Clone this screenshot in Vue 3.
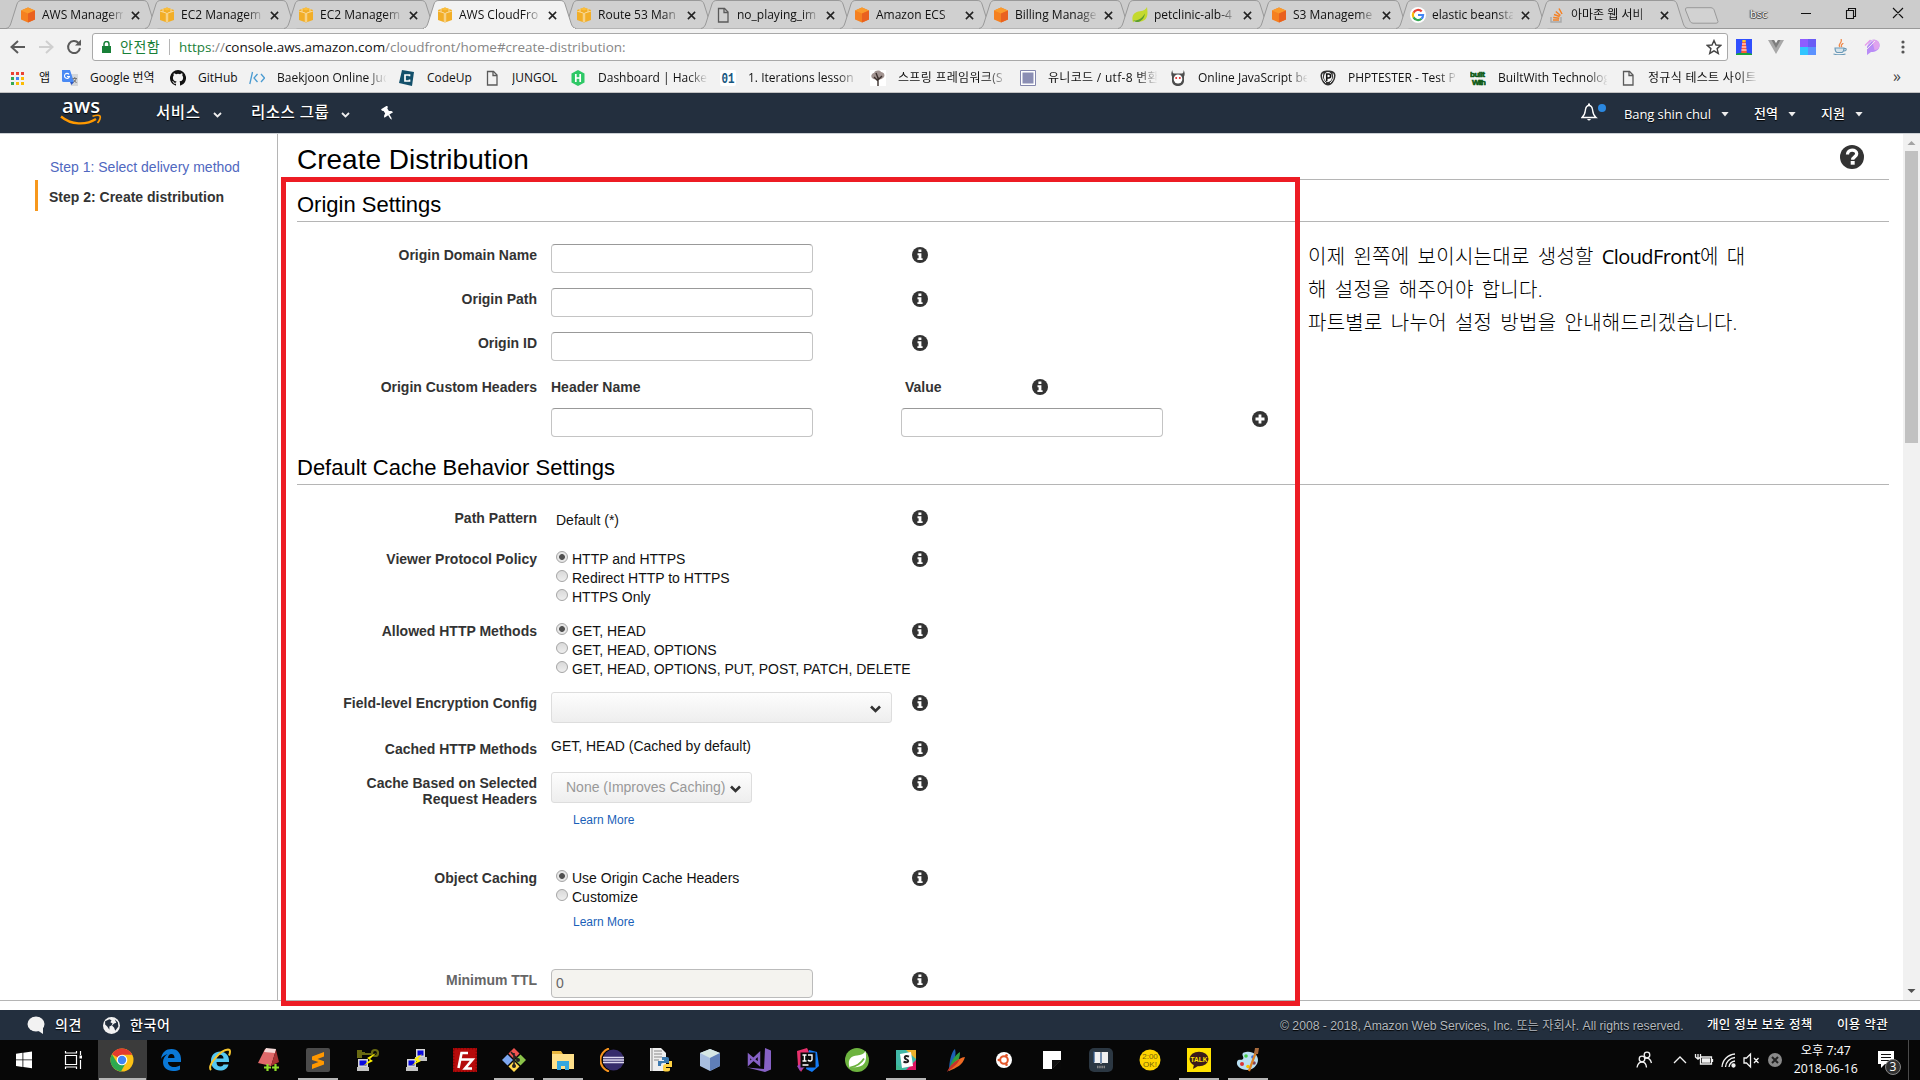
<script setup>
const icons = {
  cubeOrange: '<path d="M8 .5 15 3.5v9L8 15.5l-7-3v-9z" fill="#f58020"/><path d="M8 .5 15 3.5 8 6.5 1 3.5z" fill="#fa9a2c"/><path d="M15 3.5v9L8 15.5v-9z" fill="#e9611f"/>',
  cubeYellow: '<path d="M8 .5 15 3v10l-7 2.5L1 13V3z" fill="#f2ae27"/><path d="M8 .5 12 2 8 3.6 4 2z" fill="#fbbf3c"/><path d="M1.2 4.2 7.3 6v9M14.8 4.2 8.7 6v9M4 2v3M12 2v3" stroke="#f8dfa8" stroke-width=".9" fill="none"/>',
  file: '<path d="M3.5 1.5h6l3.500 3.500v10h-9.500z" fill="none" stroke="#5a5a5a" stroke-width="1.300"/><path d="M9 1.500v4h4" fill="none" stroke="#5a5a5a" stroke-width="1.300"/>',
  leaf: '<path d="M15 0c1 7 1 13-6 14.500-3 .5-5 0-6-1L1 15.500C-1 9 2 5 8 4.300 12 4 14 2 15 0z" fill="#c4d92e"/><path d="M1 13.500c5 .5 9-2 12-7-1 6-5 9-9 8.500z" fill="#5d9e2f"/>',
  google: '<circle cx="8" cy="8" r="8" fill="#fff"/><path d="M11.700 4.400A5.200 5.200 0 0 0 3.500 5.700" stroke="#ea4335" stroke-width="2.200" fill="none"/><path d="M3.500 5.500a5.200 5.200 0 0 0 0 5" stroke="#fbbc05" stroke-width="2.200" fill="none"/><path d="M3.500 10.400a5.200 5.200 0 0 0 8 1.300" stroke="#34a853" stroke-width="2.200" fill="none"/><path d="M8 8h5.100a5.200 5.200 0 0 1-1.700 3.800" stroke="#4285f4" stroke-width="2.200" fill="none"/>',
  stack: '<path d="M2 10v5h10v-5" stroke="#a8a8a8" stroke-width="1.400" fill="none"/><path d="M4 13h6M4.200 10.500l6 .8M5 7.500l5.700 2M6.800 4.500l4.700 4M10 1.500l3 5.500" stroke="#f48024" stroke-width="1.500"/>',
  translate: '<path d="M6 4h10v12H9z" fill="#d5d7da"/><path d="M0 0h8l4 12H1.500A1.500 1.500 0 0 1 0 10.500z" fill="#4a8af4"/><path d="M8 12h4l-2.500 3z" fill="#2a56c6"/><path d="M7 4.400A2.500 2.500 0 1 0 7.400 6.500H5" stroke="#fff" stroke-width="1.100" fill="none"/><path d="M10.500 8.500H15M12.800 7v1.500M14.200 8.500c-.5 2-2 3.500-3 4M11.500 9.500l3 3.500" stroke="#777" fill="none"/>',
  github: '<path fill="#111" fill-rule="evenodd" d="M8 0a8 8 0 0 0-2.530 15.590c.4.070.55-.17.55-.38v-1.490c-2.230.48-2.700-.94-2.700-.94-.36-.93-.89-1.180-.89-1.180-.73-.5.050-.49.050-.49.810.060 1.230.830 1.230.830.720 1.230 1.880.870 2.340.670.070-.52.280-.87.510-1.070-1.780-.2-3.640-.89-3.640-3.950 0-.87.310-1.590.820-2.150-.08-.2-.36-1.020.080-2.120 0 0 .67-.21 2.200.820a7.600 7.600 0 0 1 4 0c1.530-1.040 2.200-.82 2.200-.82.440 1.100.160 1.920.080 2.120.510.560.820 1.270.820 2.150 0 3.070-1.870 3.750-3.650 3.950.290.250.540.730.540 1.480v2.190c0 .21.150.46.550.38A8 8 0 0 0 8 0z"/>',
  code: '<path d="M3.500 2 .8 14M8.500 4 5 8l3.500 4M12 4l3.500 4-3.500 4" stroke="#4a9bd1" stroke-width="1.300" fill="none"/>',
  codeup: '<path d="M3 0 15 2 13 16 0 13z" fill="#13506b"/><path d="M10.500 6.300V5H6v6h4.500V9.600" stroke="#fff" stroke-width="1.700" fill="none"/>',
  hacker: '<path d="M8 0 14.500 3.500v9L8 16l-6.500-3.500v-9z" fill="#2ec866"/><path d="M5.800 4v8M10.200 4v8M5.800 8h4.400" stroke="#fff" stroke-width="1.700"/>',
  zeroone: '<rect width="16" height="16" rx="2" fill="#fff"/><text x="1.500" y="13" font-family="Liberation Mono, monospace" font-weight="700" font-size="14" textLength="13" lengthAdjust="spacingAndGlyphs" fill="#17577f">01</text>',
  tree: '<rect width="16" height="16" fill="#fff"/><path d="M2 8c-2-3 1-5 2-5 1-3 6-3 7-1 3 0 5 4 2 6-2 2-4 1-5 1-2 0-4 1-6-1z" fill="#a19390"/><path d="M8 16V7M8 11 4 7M8 10l4-4M8 8 6 3" stroke="#3a2f2c" stroke-width="1.400" fill="none"/>',
  square: '<path d="M.5.5h15v15H.5z" fill="#fff" stroke="#8487ad"/><path d="M2.500 2.500h11v11h-11z" fill="#8b8eb4"/>',
  demon: '<path d="M2.500 0c-.3 2 .5 3.500 1.500 3.500h8c1 0 1.800-1.500 1.500-3.500 1.500 2 1.500 5 .5 6.500V11c0 3-3 5-6 5s-6-2-6-5V6.500C1 5 1 2 2.500 0z" fill="#4d4d4d"/><ellipse cx="8" cy="9" rx="4.300" ry="4.600" fill="#fff"/><circle cx="6.200" cy="8" r="1" fill="#d22"/><circle cx="9.800" cy="8" r="1" fill="#d22"/>',
  php: '<path d="M8 .5c4 0 7.500 1 7.500 5 0 5-4 10-7.500 10S.5 10.500.5 5.500c0-4 3.500-5 7.500-5z" fill="#333"/><path d="M3 3.500C1.500 7 3.500 11 6 13M13 3.500c1.500 3.500-.5 7.500-3 9.500" stroke="#fff" stroke-width="1" fill="none"/><ellipse cx="8" cy="7" rx="4" ry="5" fill="#fff"/><path d="M6.700 11V4h1.800c2.800 0 2.800 4 0 4H6.700" stroke="#111" stroke-width="1.600" fill="none"/>',
  built: '<text x="0" y="7" font-family="Liberation Sans, sans-serif" font-weight="700" font-size="8" fill="#0c5914" stroke="#0c5914" stroke-width=".6" textLength="15">built</text><text x="2" y="15" font-family="Liberation Sans, sans-serif" font-weight="700" font-size="8" fill="#0c5914" stroke="#0c5914" stroke-width=".6" textLength="14">With</text>',
  lighthouse: '<path fill="#304ffe" d="M0 0h16v16H0z"/><path d="M0 15c4-2 12-2 16 0v1H0z" fill="#1aa33a"/><path d="M6.300 3h3.400l1.100 11H5.200z" fill="#ff5a36"/><path d="M6 5h4M5.700 8h4.600M5.400 11h5.200" stroke="#fff" stroke-width="1.200"/><path d="M6.300 1h3.400v2H6.300z" fill="#ffca28"/>',
  vue: '<path d="M0 1h6l2 3.500L10 1h6L8 15z" fill="#a8a8a8"/><path d="M3.500 1H6l2 3.500L10 1h2.500L8 9z" fill="#7d7d7d"/>',
  quad: '<path fill="#8e5cff" d="M0 0h8v8H0z"/><path fill="#6a5cf5" d="M8 0h8v8H8z"/><path fill="#31c5ff" d="M0 8h8v8H0z"/><path fill="#5c92ff" d="M8 8h8v8H8z"/>',
  java: '<path d="M8 8C5 5 11 4 9 0M10 8c-2-2 1-3 1-4" stroke="#f08a4b" stroke-width="1.300" fill="none"/><path d="M3 9h9c0 3-1 4-2 4.500H5C4 13 3 12 3 9zM12 9.500c3-.5 3 2 0 2.500M1.500 15c4 1 9 1 12 0" stroke="#6b9ab8" stroke-width="1.100" fill="#d6e3ea"/>',
  patreon: '<path d="M5 2c6-3 11 0 10.500 5-.4 4-4 6-8.500 6l-4 3V8z" fill="#b98cf6"/><path d="M8 1c5-1 8 2 7.500 6-.3 3-3 4-5 4z" fill="#e0a3ee"/><path d="M1 5l4-4M1.500 8l7-7M3 10l8-8" stroke="#f2f2f2" stroke-width=".9"/><path d="M1 6.500l5.500-5.500" stroke="#e79bea" stroke-width="1.200"/>',
}

const tabs = [
  { icon: 'cubeOrange', title: 'AWS Managem' },
  { icon: 'cubeYellow', title: 'EC2 Managem' },
  { icon: 'cubeYellow', title: 'EC2 Managem' },
  { icon: 'cubeYellow', title: 'AWS CloudFro', active: true },
  { icon: 'cubeYellow', title: 'Route 53 Man' },
  { icon: 'file', title: 'no_playing_im' },
  { icon: 'cubeOrange', title: 'Amazon ECS' },
  { icon: 'cubeOrange', title: 'Billing Manage' },
  { icon: 'leaf', title: 'petclinic-alb-4' },
  { icon: 'cubeOrange', title: 'S3 Manageme' },
  { icon: 'google', title: 'elastic beansta' },
  { icon: 'stack', title: '아마존 웹 서비' },
]

const bookmarks = [
  { icon: 'translate', title: 'Google 번역', w: 108 },
  { icon: 'github', title: 'GitHub', w: 79 },
  { icon: 'code', title: 'Baekjoon Online Jud', w: 150, cut: true },
  { icon: 'codeup', title: 'CodeUp', w: 85 },
  { icon: 'file', title: 'JUNGOL', w: 86 },
  { icon: 'hacker', title: 'Dashboard | Hacker', w: 150, cut: true },
  { icon: 'zeroone', title: '1. Iterations lesson -', w: 150, cut: true },
  { icon: 'tree', title: '스프링 프레임워크(S', w: 150, cut: true, ko: true },
  { icon: 'square', title: '유니코드 / utf-8 변환', w: 150, cut: true, ko: true },
  { icon: 'demon', title: 'Online JavaScript be', w: 150, cut: true },
  { icon: 'php', title: 'PHPTESTER - Test P', w: 150, cut: true },
  { icon: 'built', title: 'BuiltWith Technolog', w: 150, cut: true },
  { icon: 'file', title: '정규식 테스트 사이트', w: 150, cut: true, ko: true },
]

const extensions = ['lighthouse', 'vue', 'quad', 'java', 'patreon']

const originFields = ['Origin Domain Name', 'Origin Path', 'Origin ID']
const protocols = ['HTTP and HTTPS', 'Redirect HTTP to HTTPS', 'HTTPS Only']
const methods = ['GET, HEAD', 'GET, HEAD, OPTIONS', 'GET, HEAD, OPTIONS, PUT, POST, PATCH, DELETE']
const caching = ['Use Origin Cache Headers', 'Customize']

const info = '<circle cx="8" cy="8" r="8" fill="#333"/><path d="M6.400 2.600h3v2.500h-3zM5.500 6.300h3.900v4.900h1.200v1.900H5.400v-1.900h1.200V8.200H5.500z" fill="#fff"/>'

const apps = [
  { name: 'start', art: '<path fill="#fff" d="M4 5.700l6.500-.9v6.700H4zM11.300 4.700 20 3.500v8h-8.700zM4 12.300h6.500V19L4 18.100zM11.300 12.300H20v8l-8.700-1.200z"/>' },
  { name: 'view', art: '<path d="M4.500 7.500h11v9h-11zM4.500 3v2h11V3M4.500 21v-2h11v2M19.500 3v4M19.500 12v9" fill="none" stroke="#fff" stroke-width="1.200"/><path d="M18.500 7.500h2.500v3h-2.500z" fill="#fff"/>' },
  { name: 'chrome', on: true, focus: true, art: '<circle cx="12" cy="12" r="11.500" fill="#fbc116"/><path d="M12 12 2 6.200A11.500 11.500 0 0 1 22.200 6.800H12z" fill="#e33b2e"/><path d="M2 6.200A11.500 11.500 0 0 0 11 23.500l5-9L12 12 7 14.500z" fill="#2da94f"/><circle cx="12" cy="12" r="5.300" fill="#fff"/><circle cx="12" cy="12" r="4.200" fill="#4285f4"/>' },
  { name: 'edge', art: '<path fill="#0a78d7" d="M2 11C3 4 7 1 12.500 1 19 1 22 6 22 11v3H9c0 3.500 3 5 6 5 2.500 0 4.500-.6 6-1.500v4c-2 1-4 1.500-7 1.500-6 0-10-3.500-10-9 0-3 1.500-6 4.500-8C5 7 3 9 2 11zm7-1h6.500c0-2.500-1-4-3.200-4C10.500 6 9.200 7.500 9 10z"/>' },
  { name: 'ie', art: '<path fill="#55c8f2" fill-rule="evenodd" d="M3 13C3 7 7 3.500 12 3.500S21 7 21 12.500V14H8.500c0 3 1.500 4.500 4 4.500 1.500 0 2.500-.7 3-2h5c-1 4-4 6-8.500 6-5.500 0-9-4-9-9.500zm5.500-2.500h7c0-2.500-1.500-3.700-3.500-3.700s-3.300 1.300-3.500 3.700z"/><path d="M3 22C-1 18 12 2 20 1.500c3 0 2 4 1 6" fill="none" stroke="#f6c52e" stroke-width="2"/>' },
  { name: 'notes', art: '<path d="M8 1 19 2 14 18 1 15z" fill="#e0696a"/><path d="M9 0 19 1l-1 4L7 4z" fill="#f5d9d8"/><path d="m19 2 3 12-8 4z" fill="#a83234"/><path d="M10.500 16v7M7 19.500h7M18.500 16v7M15 19.500h7" stroke="#8edc2a" stroke-width="2.200"/>' },
  { name: 'sublime', on: true, art: '<rect width="24" height="24" rx="2" fill="#4b4b4b"/><path d="M6 8.500 18 4v4.600l-6.500 2.300 6.500 2.300v3.300L6 21v-4.500l6.500-2.400L6 12z" fill="#ff9800"/>' },
  { name: 'puttygen', art: '<path d="M3 4h7v3H3zM10 5h8v2h-8zM2 2h5v8H2z" fill="#696a12"/><circle cx="20" cy="5" r="3" fill="none" stroke="#696a12" stroke-width="2.200"/><path d="M3 11h10v8H3z" fill="#d7d7d7"/><path d="M4.500 12.500h7v5h-7z" fill="#0808df"/><path d="M2 19h12v4H2z" fill="#c4c4c4"/><path d="m21 5-9 5 3 2-7 6 10-5-3-2z" fill="#fff200"/>' },
  { name: 'putty', art: '<path d="M12 1h9v8h-9zM3 11h9v8H3z" fill="#d7d7d7"/><path d="M13.500 2.500h6v5h-6zM4.500 12.500h6v5h-6z" fill="#0808df"/><path d="M11 9h12v4H11zM2 19h12v4H2z" fill="#c4c4c4"/><path d="m18 6-8 5 3 2-6 5 10-5-3-2z" fill="#fff200"/>' },
  { name: 'filezilla', art: '<path fill="#b50b0b" d="M0 0h24v24H0z"/><path d="M.8.800h22.400v22.400H.800z" fill="none" stroke="#700" stroke-dasharray="1.500 1.500"/><path d="M5.500 20 8.500 5H15M7 11.500h6M11.500 11.500h8L12 20.500h7" stroke="#fff" stroke-width="2.600" fill="none"/>' },
  { name: 'git', on: true, art: '<path fill="#ef5350" d="m12 0 5.500 5.500L12 11 6.500 5.500z"/><path fill="#7da7f0" d="M5.500 6.500 11 12l-5.500 5.500L0 12z"/><path fill="#8bc34a" d="M18.500 6.500 24 12l-5.500 5.500L13 12z"/><path fill="#ffd84d" d="m12 13 5.500 5.500L12 24l-5.500-5.500z"/><path d="M12 5v14M9 4l7 8" stroke="#222" stroke-width="1.600"/><circle cx="12" cy="18" r="2" fill="#222"/><circle cx="16" cy="12" r="2" fill="#222"/>' },
  { name: 'explorer', on: true, art: '<path fill="#e8b63e" d="M1 3h9l2 3h11v3H1z"/><path fill="#ffe08a" d="M1 6h22v15H1z"/><path d="M6 22v-9h12v9h-4v-4h-4v4z" fill="#35a7e0"/>' },
  { name: 'eclipse', art: '<path d="M9 .5a12 12 0 0 0 0 23" fill="none" stroke="#f7941e" stroke-width="2"/><circle cx="13.500" cy="12" r="10.500" fill="#362c6b"/><path d="M3 9.500h21M3 12h21M3 14.500h21" stroke="#ded9f0" stroke-width="1.300"/>' },
  { name: 'python', art: '<path d="M1 0h11l5 5v18H1z" fill="#eee"/><path d="M3 0v23M5 3h8M5 6h8M5 9h8M5 12h5" stroke="#888" stroke-width="1"/><path d="M13 9h5c2 0 2 1 2 3v3h-6c-2 0-2 1-2 3H9v-5h6v-1h-2z" fill="#3d7ab0"/><path d="M20 13h3v6h-6v1h4v2c0 2-7 2-7 0v-3c0-2 1-3 3-3h3z" fill="#ffd242"/>' },
  { name: 'virtualbox', art: '<path d="m12 1 10 4v13l-10 5-10-5V5z" fill="#a8bfe0"/><path d="m12 1 10 4-10 5L2 5z" fill="#d6e8e4"/><path d="m12 10 10-5v13l-10 5z" fill="#5f7fb8"/>' },
  { name: 'vs', art: '<path d="M18 0l6 2.500v19L18 24 0 19.500l17 1.500z" fill="#8661c5"/><path d="M2 7.500 12 16V6L2 15.500z" fill="none" stroke="#8661c5" stroke-width="2.500"/>' },
  { name: 'intellij', art: '<path d="M1 3 11 0l4 8-10 16-3-6z" fill="#e8316c"/><path d="m13 2 8 2 2 14-7 6-6-3z" fill="#147bf5"/><path d="m1 18 7-4 1 5-5 4z" fill="#9a48b9"/><path d="M4.500 4.500h15v15h-15z" fill="#0a0a0a"/><path d="M6.500 7h4M8.500 7v6M6.500 13h4M12 7h4v4.500c0 2-3 2-4 .5M6.500 17h6" stroke="#fff" stroke-width="1.400" fill="none"/>' },
  { name: 'spring', art: '<circle cx="12" cy="12" r="12" fill="#6db33f"/><path d="M20.500 3c1.500 8 .5 15-8 16-3 .4-5.500 0-8 .5C2 10 7 8 12 7.500c4-.4 7-1.500 8.500-4.500z" fill="#fff"/><path d="M5 19.500c6-1 11-4 14-9" stroke="#6db33f" stroke-width="1.700" fill="none"/>' },
  { name: 'slack', on: true, art: '<path d="M2 2h20v20H2z" fill="#41b8a7"/><path d="M12 2h10v9z" fill="#ecb22e"/><path d="M12 22h10V12z" fill="#e01563"/><path d="M2 16v6h8z" fill="#3eb991"/><path d="m6 6 11-2 2 14-11 2z" fill="#fff"/><path d="M15 8.700c-4.500-2-5.500 1.500-2.500 2.700s2 3.800-3 2.300" stroke="#222" stroke-width="2" fill="none"/>' },
  { name: 'feather', art: '<path d="M6 23C6 12 9 3 12 1c2 7-2 16-6 22z" fill="#1c5fb5"/><path d="M6 23c1-9 6-16 11-19 0 9-5 15-11 19z" fill="#2f9e41"/><path d="M6 23c2-7 9-13 16-14-2 8-9 11-16 14z" fill="#ee6a23"/><path d="M4 24C7 17 12 13 17 11c-3 6-8 9-13 13z" fill="#c5322c"/>' },
  { name: 'ubuntu', art: '<circle cx="12" cy="12" r="8" fill="#fff"/><circle cx="12" cy="12" r="3.800" fill="none" stroke="#e2562a" stroke-width="2"/><circle cx="6.800" cy="12" r="1.300" fill="#e2562a"/><circle cx="14.500" cy="7.300" r="1.300" fill="#e2562a"/><circle cx="14.500" cy="16.700" r="1.300" fill="#e2562a"/>' },
  { name: 'sticky', art: '<path d="M3 3h18v9h-9v9H3z" fill="#fff"/><path d="M13 20v-7h7z" fill="#fff"/><path d="M12 21 21 12v9z" fill="#080808"/><path d="M12.300 12.300h8v.7l-7.300 7.300h-.7z" fill="#111"/>' },
  { name: 'books', art: '<rect width="24" height="24" rx="5" fill="#2b3742"/><path d="M5 4h6l1 1 1-1h6v11h-6l-1 1-1-1H5z" fill="#f0f0f0"/><path d="M12 5v10M5 3.500v11" stroke="#345b8c" stroke-width="1.300"/><path d="M8 19h8" stroke="#888" stroke-width="2.500" stroke-dasharray="1.500 .7"/>' },
  { name: 'ok', art: '<circle cx="12" cy="12" r="10.500" fill="#ffd400"/><text x="12" y="11" text-anchor="middle" font-family="Liberation Sans, sans-serif" font-size="8" fill="#77640a">2:00</text><text x="12" y="19" text-anchor="middle" font-family="Liberation Sans, sans-serif" font-size="8" fill="#77640a">OK!</text>' },
  { name: 'kakao', on: true, art: '<path fill="#ffe200" d="M0 0h24v24H0z"/><ellipse cx="12" cy="11" rx="9.500" ry="7.300" fill="#391b1b"/><path d="m7 16-1 5 5-3z" fill="#391b1b"/><text x="12" y="13.500" text-anchor="middle" font-family="Liberation Sans, sans-serif" font-weight="700" font-size="6.500" fill="#ffe200">TALK</text>' },
  { name: 'paint', on: true, art: '<path d="M10 4c7-1 12 3 12 8s-5 10-11 10S0 18 1 14s4-1 6-3-4-6 3-7z" fill="#b9dff2"/><circle cx="6" cy="16" r="2" fill="#d33"/><circle cx="10" cy="8" r="1.800" fill="#4c4"/><circle cx="12" cy="18.500" r="1.800" fill="#f6c400"/><circle cx="17" cy="9" r="1.800" fill="#36d"/><circle cx="18" cy="15" r="1.800" fill="#845"/><path d="M21 1 13 23" stroke="#dc8327" stroke-width="2.200"/><path d="M19 0h4l-1 6h-4z" fill="#a86a3c"/>' },
]
</script>

<template>
  <div class="desktop">
    <div class="tabstrip">
      <div v-for="(t, i) in tabs" :key="i" class="tab" :class="{ active: t.active }">
        <svg class="tab-shape" viewBox="0 0 153 29" width="153" height="29">
          <path d="M0 28.500C3 28 4 26 5 23L11 4C12 1.500 13 .5 16 .5H137C140 .5 141 1.500 142 4L148 23C149 26 150 28 153 28.500" :fill="t.active ? '#f2f2f2' : '#d0d0d0'" stroke="#999" />
          <path v-if="t.active" d="M1 28.500h151" stroke="#f2f2f2" />
        </svg>
        <svg class="fav" viewBox="0 0 16 16" v-html="icons[t.icon]"></svg>
        <span class="tab-title">{{ t.title }}</span>
        <svg class="close" viewBox="0 0 10 10"><path d="m1 1 8 8M9 1 1 9" stroke="#222" stroke-width="1.700" /></svg>
      </div>
      <svg class="newtab" viewBox="0 0 36 18"><path d="M3 .7h24q2 0 3 2l4 12q0 1.500-2 1.500H9q-2 0-3-2L1.500 3Q1 .7 3 .7z" fill="#d2d2d2" stroke="#999" /></svg>
      <span class="profile">bsc</span>
      <svg class="winctl" viewBox="0 0 110 14">
        <path d="M6 7.500h10M51.500 4.500h7v8h-7zM53.500 4.500v-2h7v8h-2M98 2l10 10M108 2 98 12" fill="none" stroke="#111" stroke-width="1.100" />
      </svg>
    </div>

    <div class="toolbar">
      <svg class="nav" viewBox="0 0 92 28">
        <path d="M25 14H12M18 8l-6.500 6 6.500 6" fill="none" stroke="#5a5a5a" stroke-width="2" />
        <path d="M39 14h13M46 8l6.500 6-6.500 6" fill="none" stroke="#cfcfcf" stroke-width="2" />
        <path d="M78.500 10A6 6 0 1 0 80 15" fill="none" stroke="#5a5a5a" stroke-width="2" />
        <path d="M81 6.500v6h-6z" fill="#5a5a5a" />
      </svg>
      <div class="omnibox">
        <svg class="lock" viewBox="0 0 9 12"><path d="M2 5V3a2.500 2.500 0 0 1 5 0v2" fill="none" stroke="#188038" stroke-width="1.500" /><path d="M0 5h9v7H0z" fill="#188038" /></svg>
        <span class="safe">안전함</span>
        <span class="bar"></span>
        <span class="url"><span class="g">https</span>://<b>console.aws.amazon.com</b>/cloudfront/home#create-distribution:</span>
        <svg class="star" viewBox="0 0 16 16"><path d="m8 1.500 2 4.500 4.800.4-3.700 3.200 1.200 4.800L8 11.800l-4.300 2.600 1.200-4.800L1.200 6.400 6 6z" fill="none" stroke="#444" stroke-width="1.400" /></svg>
      </div>
      <div class="exts">
        <svg v-for="e in extensions" :key="e" viewBox="0 0 16 16" v-html="icons[e]"></svg>
      </div>
      <svg class="dots" viewBox="0 0 4 14"><circle cx="2" cy="2" r="1.600" /><circle cx="2" cy="7" r="1.600" /><circle cx="2" cy="12" r="1.600" /></svg>
    </div>

    <div class="bookmarks">
      <svg class="grid9" viewBox="0 0 13 13">
        <path fill="#ea4335" d="M0 0h3v3H0zM5 0h3v3H5zM10 0h3v3h-3z" /><path fill="#34a853" d="M0 5h3v3H0zM0 10h3v3H0z" /><path fill="#4285f4" d="M5 5h3v3H5z" /><path fill="#fbbc05" d="M10 5h3v3h-3zM5 10h3v3H5zM10 10h3v3h-3z" />
      </svg>
      <span class="apps-label">앱</span>
      <div v-for="b in bookmarks" :key="b.title" class="bm" :style="{ width: b.w + 'px' }">
        <svg viewBox="0 0 16 16" v-html="icons[b.icon]"></svg>
        <span :class="{ cut: b.cut, ko: b.ko }">{{ b.title }}</span>
      </div>
      <span class="more">»</span>
    </div>

    <header class="awsbar">
      <svg class="logo" viewBox="0 0 44 30">
        <text x="21" y="15" text-anchor="middle" font-family="Open Sans, sans-serif" font-weight="600" font-size="20" textLength="38" lengthAdjust="spacingAndGlyphs" fill="#fff">aws</text>
        <path d="M1 18.500c10 8.500 25 9 35 2.500" fill="none" stroke="#f90" stroke-width="2.300" /><path d="M32.500 18.300c3-1 6.500-1.500 7.500-.3s-.5 4.800-2.500 7" fill="none" stroke="#f90" stroke-width="1.700" />
      </svg>
      <span class="nav1">서비스</span>
      <svg class="chev c1" viewBox="0 0 9 6"><path d="m1 1 3.500 3.500L8 1" fill="none" stroke="#eee" stroke-width="1.800" /></svg>
      <span class="nav2">리소스 그룹</span>
      <svg class="chev c2" viewBox="0 0 9 6"><path d="m1 1 3.500 3.500L8 1" fill="none" stroke="#eee" stroke-width="1.800" /></svg>
      <svg class="pin" viewBox="0 0 14 14"><g transform="rotate(-32 7 7)"><path d="M4 .5h6.500V2L9.300 3v2.800c1.700.7 2.700 1.700 2.700 3H8v3.500L7.300 14l-.7-1.700V8.800H2.500c0-1.300 1-2.300 2.700-3V3L4 2z" fill="#fff" /></g></svg>
      <div class="account">
        <svg class="bell" viewBox="0 0 26 20">
          <path d="M1 14.500c3-2.500 3-4 3.500-8C5 3.500 6 2.500 8 2.500s3 1 3.500 4c.5 4 .5 5.500 3.500 8z" fill="none" stroke="#fff" stroke-width="1.400" /><path d="M6 16h4q-2 3-4 0zM7 .5h2v2H7z" fill="#fff" /><circle cx="21" cy="5" r="4" fill="#2b88e0" />
        </svg>
        <span class="user">Bang shin chul</span><i class="caret"></i>
        <span class="region">전역</span><i class="caret"></i>
        <span class="support">지원</span><i class="caret"></i>
      </div>
    </header>

    <main class="console">
      <aside class="steps">
        <a class="step">Step 1: Select delivery method</a>
        <div class="step current">Step 2: Create distribution</div>
      </aside>

      <section class="page">
        <div class="title-row">
          <h1>Create Distribution</h1>
          <svg class="help" viewBox="0 0 24 24"><circle cx="12" cy="12" r="12" fill="#333" /><path d="M7.500 9.500C7.500 3.500 16.700 4 16.700 8.800c0 3.200-4 3-4 6" fill="none" stroke="#fff" stroke-width="3.300" /><path d="M10.700 16h4v3.700h-4z" fill="#fff" /></svg>
        </div>

        <h2 class="origin-title">Origin Settings</h2>
        <div v-for="f in originFields" :key="f" class="row h44">
          <label>{{ f }}</label>
          <div class="ctl"><div class="input"></div></div>
          <svg class="info" viewBox="0 0 16 16" v-html="info"></svg>
        </div>
        <div class="row headers">
          <label>Origin Custom Headers</label>
          <div class="pairs">
            <div class="pair-head"><b>Header Name</b><b>Value</b><svg class="info" viewBox="0 0 16 16" v-html="info"></svg></div>
            <div class="pair">
              <div class="input"></div>
              <div class="input"></div>
              <svg class="plus" viewBox="0 0 16 16"><circle cx="8" cy="8" r="8" fill="#333" /><path d="M8 3.500v9M3.500 8h9" stroke="#fff" stroke-width="2.800" /></svg>
            </div>
          </div>
        </div>

        <h2 class="cache-title">Default Cache Behavior Settings</h2>
        <div class="row path">
          <label>Path Pattern</label>
          <div class="ctl indent">Default (*)</div>
          <svg class="info" viewBox="0 0 16 16" v-html="info"></svg>
        </div>
        <div class="row h72">
          <label>Viewer Protocol Policy</label>
          <div class="ctl radios"><div v-for="(p, i) in protocols" :key="p" class="opt"><i class="radio" :class="{ on: i === 0 }"></i>{{ p }}</div></div>
          <svg class="info" viewBox="0 0 16 16" v-html="info"></svg>
        </div>
        <div class="row h72">
          <label>Allowed HTTP Methods</label>
          <div class="ctl radios"><div v-for="(m, i) in methods" :key="m" class="opt"><i class="radio" :class="{ on: i === 0 }"></i>{{ m }}</div></div>
          <svg class="info" viewBox="0 0 16 16" v-html="info"></svg>
        </div>
        <div class="row h46">
          <label>Field-level Encryption Config</label>
          <div class="ctl"><div class="select wide"><svg class="sel-chev" viewBox="0 0 11 8"><path d="m1 1.500 4.500 4.500L10 1.500" fill="none" stroke="#333" stroke-width="2.600" /></svg></div></div>
          <svg class="info" viewBox="0 0 16 16" v-html="info"></svg>
        </div>
        <div class="row h34">
          <label>Cached HTTP Methods</label>
          <div class="ctl">GET, HEAD (Cached by default)</div>
          <svg class="info" viewBox="0 0 16 16" v-html="info"></svg>
        </div>
        <div class="row h95">
          <label>Cache Based on Selected<br />Request Headers</label>
          <div class="ctl">
            <div class="select"><span class="sel-text">None (Improves Caching)</span><svg class="sel-chev" viewBox="0 0 11 8"><path d="m1 1.500 4.500 4.500L10 1.500" fill="none" stroke="#333" stroke-width="2.600" /></svg></div>
            <a class="learn first">Learn More</a>
          </div>
          <svg class="info" viewBox="0 0 16 16" v-html="info"></svg>
        </div>
        <div class="row h102">
          <label>Object Caching</label>
          <div class="ctl radios">
            <div v-for="(c, i) in caching" :key="c" class="opt"><i class="radio" :class="{ on: i === 0 }"></i>{{ c }}</div>
            <a class="learn">Learn More</a>
          </div>
          <svg class="info" viewBox="0 0 16 16" v-html="info"></svg>
        </div>
        <div class="row">
          <label class="dim">Minimum TTL</label>
          <div class="ctl"><div class="input disabled">0</div></div>
          <svg class="info" viewBox="0 0 16 16" v-html="info"></svg>
        </div>
      </section>

      <div class="scrollbar">
        <svg viewBox="0 0 17 17"><path d="M4.500 11 8.500 7l4 4z" fill="#a3a3a3" /></svg>
        <div class="thumb"></div>
        <svg class="down" viewBox="0 0 17 17"><path d="m4.500 6 4 4 4-4z" fill="#505050" /></svg>
      </div>
    </main>

    <footer class="foot">
      <svg class="bubble" viewBox="0 0 18 18"><ellipse cx="9" cy="8" rx="8.500" ry="7.500" fill="#f2f2f2" /><path d="m10 14 6-3v7z" fill="#f2f2f2" /></svg>
      <span class="feedback">의견</span>
      <svg class="globe" viewBox="0 0 16 16"><circle cx="8" cy="8" r="8" fill="#f2f2f2" /><path d="M2 4 6 2l2 1-1 2 2 1-1 2-2 1v3L4 9 2 7zM11 2l3 3 .5 4-3 4-1-3-2-2 2-2 2-.5z" fill="#232f3e" /></svg>
      <span class="lang">한국어</span>
      <span class="copy">© 2008 - 2018, Amazon Web Services, Inc. 또는 자회사. All rights reserved.</span>
      <span class="privacy">개인 정보 보호 정책</span>
      <span class="terms">이용 약관</span>
    </footer>

    <div class="taskbar">
      <div v-for="a in apps" :key="a.name" class="app" :class="{ on: a.on, focus: a.focus }">
        <svg viewBox="0 0 24 24" v-html="a.art"></svg>
      </div>
      <svg class="tray" viewBox="0 0 154 40">
        <g fill="none" stroke="#f2f2f2" stroke-width="1.300">
          <circle cx="8" cy="19" r="2.800" /><path d="M3 27.500q1-5.500 5-5.500t4.500 5.500" /><circle cx="13" cy="15" r="2.800" /><path d="M11 18.500q5-1.500 6.500 4.500" />
          <path d="m40 23 6-6 6 6" />
          <path d="M66.500 17h11v7h-11zM64 14v6M61.500 14v3q2.500 3 5 0v-3" /><path d="M68.500 19h7v3h-7z" fill="#f2f2f2" /><path d="M78.500 19v3" />
          <path d="M88 27A14 14 0 0 1 101 14M91.500 27A10 10 0 0 1 101 17.500M95 27a7 7 0 0 1 6-6" /><circle cx="99.500" cy="25.500" r="1.500" fill="#f2f2f2" />
          <path d="M110 18h2.500l4-4v13l-4-4H110zM120 18l4.500 5M124.500 18l-4.500 5" />
        </g>
        <circle cx="141" cy="20" r="7" fill="#898989" /><path d="m138 17 6 6M144 17l-6 6" stroke="#222" stroke-width="2" />
      </svg>
      <div class="clock"><span>오후 7:47</span><span>2018-06-16</span></div>
      <svg class="notif" viewBox="0 0 26 28">
        <path d="M1 2h16v13H8l-4 4v-4H1z" fill="#fff" /><path d="M4 5.500h10M4 8.500h10M4 11.500h10" stroke="#111" stroke-width="1.200" />
        <circle cx="16" cy="18" r="7.500" fill="#303030" stroke="#888" /><text x="16" y="22.300" text-anchor="middle" font-family="Open Sans, sans-serif" font-size="12" fill="#fff">3</text>
      </svg>
      <i class="peek"></i>
    </div>

    <div class="frame"></div>
    <p class="note">이제 왼쪽에 보이시는대로 생성할 <span class="latin">CloudFront</span>에 대<br />해 설정을 해주어야 합니다.<br />파트별로 나누어 설정 방법을 안내해드리겠습니다.</p>
  </div>
</template>

<style>
body { margin: 0; overflow: hidden; }
</style>

<style scoped>
* { box-sizing: border-box; }
svg { display: block; flex: none; }
.desktop { position: relative; width: 1920px; height: 1080px; background: #fff; font: 12px/16px "Open Sans", "Noto Sans CJK KR", sans-serif; color: #111; white-space: nowrap; overflow: hidden; }
.tabstrip { height: 29px; background: #ccc; border-bottom: 1px solid #999; display: flex; padding-left: 6px; }
.tab { position: relative; width: 139px; height: 29px; flex: none; display: flex; align-items: center; padding-left: 14px; }
.tab.active { z-index: 2; }
.tab-shape { position: absolute; left: 0; top: 0; }
.fav { position: relative; width: 16px; height: 16px; margin-top: 1px; }
.tab-title { position: relative; width: 81px; margin-left: 6px; padding-top: 1px; overflow: hidden; mask-image: linear-gradient(90deg, #000 65px, transparent 83px); }
.close { position: relative; width: 9px; height: 9px; margin-left: 8px; margin-top: 2px; }
.newtab { width: 36px; height: 18px; margin: 7px 0 0 10px; }
.profile { margin: 6px 0 0 30px; width: 18px; color: #fff; font-size: 11px; text-shadow: 0 0 1px #444, 1px 0 1px #444, -1px 0 1px #444, 0 1px 0 #555; }
.winctl { width: 110px; height: 14px; margin: 6px 0 0 27px; }
.toolbar { height: 35px; background: #f2f2f2; display: flex; padding-top: 4px; }
.nav { width: 92px; height: 28px; }
.omnibox { width: 1636px; height: 28px; border: 1px solid #a9a9a9; border-radius: 3px; background: #fff; display: flex; align-items: center; font-size: 14px; }
.lock { width: 9px; height: 12px; margin-left: 9px; }
.safe { color: #188038; width: 41px; margin-left: 9px; letter-spacing: .5px; }
.bar { width: 1px; height: 16px; margin: 0 9px 0 8px; background: #b5b5b5; }
.url { color: #868686; flex: 1; font-size: 13.460px; }
.url b { font-weight: 400; color: #111; }
.g { color: #188038; }
.star { width: 16px; height: 16px; margin-right: 5px; }
.exts { display: flex; gap: 16px; padding: 6px 0 0 8px; }
.exts svg { width: 16px; height: 16px; }
.dots { width: 4px; height: 14px; margin: 7px 0 0 21px; fill: #555; }
.bookmarks { height: 29px; background: #f2f2f2; border-bottom: 1px solid #c2c2c2; display: flex; align-items: center; padding-left: 11px; }
.grid9 { width: 13px; height: 13px; }
.apps-label { width: 23px; margin-left: 15px; }
.bm { display: flex; align-items: center; flex: none; }
.bm svg { width: 16px; height: 16px; }
.bm span { margin-left: 12px; width: 109px; overflow: hidden; }
.bm .cut { mask-image: linear-gradient(90deg, #000 90px, transparent 110px); }
.bm .ko { letter-spacing: .3px; }
.more { margin: -4px 0 0 123px; font-size: 16px; color: #444; }
.awsbar { height: 41px; background: #232f3e; border-bottom: 1px solid #cbcfd3; display: flex; align-items: center; color: #fff; text-shadow: 0 1px 1px #000; }
.logo { width: 44px; height: 30px; margin: 0 0 0 60px; }
.nav1, .nav2 { font-size: 15.500px; font-weight: 500; line-height: 20px; margin-top: -2px; }
.nav1 { width: 56px; margin-left: 52px; letter-spacing: .6px; }
.chev { width: 9px; height: 6px; margin-top: 3px; }
.c1 { margin-left: 1px; }
.nav2 { margin-left: 29px; width: 81px; letter-spacing: .5px; }
.c2 { margin-left: 9px; }
.pin { width: 15px; height: 15px; margin-left: 30px; }
.account { margin-left: auto; display: flex; align-items: center; padding-right: 57px; font-size: 13px; font-weight: 500; }
.bell { width: 26px; height: 20px; margin-right: 17px; }
.user { width: 87px; letter-spacing: -.1px; margin-top: 1px; }
.region, .support { width: 24px; margin-left: 25px; }
.caret { width: 8px; height: 5px; margin: 2px 0 0 10px; background: #eee; clip-path: polygon(0 0, 100% 0, 50% 100%); }
.console { height: 867px; border-bottom: 1px solid #b5b5b5; display: flex; font-family: "Liberation Sans", Arial, sans-serif; font-size: 14px; }
.steps { width: 278px; border-right: 1px solid #b5b5b5; padding: 15px 0 0 35px; color: #333; }
.step { display: block; height: 31px; line-height: 36px; padding-left: 15px; color: #5068c0; }
.step.current { border-left: 3px solid #f7981d; padding-left: 11px; line-height: 35px; color: #333; font-weight: 700; }
.page { width: 1625px; padding: 0 14px 0 19px; overflow: hidden; }
.title-row { height: 46px; border-bottom: 1px solid #b5b5b5; display: flex; justify-content: space-between; padding-right: 25px; }
h1 { margin: 9px 0 0; font-size: 28px; line-height: 34px; font-weight: 400; color: #000; }
.help { width: 24px; height: 24px; margin-top: 11px; }
h2 { margin: 0; font-size: 22px; line-height: 26px; font-weight: 400; color: #000; border-bottom: 1px solid #b5b5b5; }
.origin-title { height: 42px; padding-top: 12px; margin-bottom: 22px; }
.cache-title { height: 41px; padding-top: 11px; margin-bottom: 22px; }
.row { display: grid; grid-template-columns: 240px 361px 17px; column-gap: 14px; align-content: start; }
.row .info { margin-left: -14px; }
label { text-align: right; font-weight: 700; color: #333; padding-top: 3px; }
.dim { color: #666; }
.info { width: 16px; height: 16px; margin-top: 3px; }
.ctl { color: #111; }
.h44 { height: 44px; }
.h72 { height: 72px; }
.h46 { height: 46px; }
.h34 { height: 34px; }
.h95 { height: 95px; }
.h102 { height: 102px; }
.input { width: 262px; height: 29px; border: 1px solid #c4c4c4; border-top-color: #999; border-radius: 4px; background: #fff; }
.disabled { background: #f4f3ef; color: #666; line-height: 27px; padding-left: 4px; border-color: #bbb; }
.headers { height: 68px; grid-template-columns: 240px 1fr; }
.pair-head { display: flex; height: 32px; padding-top: 3px; color: #333; }
.pair-head b:first-child { width: 354px; }
.pair-head b:nth-child(2) { width: 127px; }
.row .pair-head .info { margin: 0; }
.pair { display: flex; }
.pair .input + .input { margin-left: 88px; }
.plus { width: 16px; height: 16px; margin: 3px 0 0 89px; }
.path { height: 41px; }
.indent { padding: 5px 0 0 5px; }
.radios { padding: 1px 0 0 5px; }
.opt { height: 19px; line-height: 20px; display: flex; }
.radio { width: 12px; height: 12px; margin: 2px 4px 0 0; flex: none; border: 1px solid #a5a5a5; border-radius: 50%; background: linear-gradient(#d9d9d9, #eee); }
.radio.on { background: radial-gradient(circle, #505050 0 2.500px, #e6e6e6 3.300px); }
.select { width: 201px; height: 31px; border: 1px solid #ddd; border-radius: 3px; background: linear-gradient(#fdfdfd, #eee); display: flex; align-items: center; justify-content: space-between; padding: 0 10px 0 14px; color: #999; }
.sel-text { margin-top: -1px; }
.wide { width: 341px; justify-content: flex-end; }
.sel-chev { width: 11px; height: 8px; margin-top: 3px; }
.learn { display: block; font-size: 12px; line-height: 16px; color: #1a5fb8; margin: 8px 0 0 17px; }
.learn.first { margin: 9px 0 0 22px; }
.scrollbar { width: 17px; background: #f1f1f1; display: flex; flex-direction: column; align-items: center; }
.scrollbar svg { width: 17px; height: 17px; }
.thumb { width: 13px; height: 292px; background: #c1c1c1; }
.down { margin-top: auto; }
.foot { height: 30px; margin-top: 9px; background: #232f3e; color: #fff; display: flex; align-items: center; text-shadow: 0 1px 1px #000; font-size: 14px; font-weight: 500; }
.bubble { width: 18px; height: 18px; margin: 0 0 0 27px; }
.feedback { width: 28px; margin-left: 10px; letter-spacing: .5px; }
.globe { width: 17px; height: 17px; margin-left: 20px; }
.lang { margin-left: 10px; letter-spacing: .6px; }
.copy { margin-left: auto; width: 402px; margin-top: -1px; font: 12.200px "Liberation Sans", "Noto Sans CJK KR", sans-serif; color: #b3b8be; }
.privacy { width: 106px; margin-left: 25px; font-size: 12.500px; letter-spacing: .35px; }
.terms { width: 52px; margin: 0 31px 0 24px; font-size: 12.500px; letter-spacing: .35px; }
.taskbar { height: 40px; background: #070707; display: flex; }
.app { width: 49px; height: 40px; flex: none; display: flex; justify-content: center; padding-top: 8px; margin-left: -.05px; }
.app svg { width: 24px; height: 24px; }
.app.on { background: linear-gradient(#b5b5b5, #b5b5b5) center bottom / 40px 2px no-repeat; }
.app.focus { background: linear-gradient(#b5b5b5, #b5b5b5) center bottom / 47px 2px no-repeat, #3b3b3b; }
.tray { width: 154px; height: 40px; margin-left: 361px; }
.clock { width: 84px; display: flex; flex-direction: column; align-items: center; color: #fff; font-size: 12.300px; line-height: 18px; padding-top: 2px; margin-left: -4px; }
.notif { width: 26px; height: 28px; margin: 9px 0 0 9px; }
.peek { width: 1px; height: 40px; margin-left: 5px; background: #4a4a4a; }
.frame { position: absolute; left: 281px; top: 177px; width: 1019px; height: 829px; border: 5px solid #ed1c24; }
.note { position: absolute; left: 1308px; top: 240px; margin: 0; font-size: 20px; line-height: 33px; color: #000; font-weight: 300; letter-spacing: .28px; word-spacing: 2.600px; }
.latin { font-weight: 400; letter-spacing: -.6px; }
</style>
